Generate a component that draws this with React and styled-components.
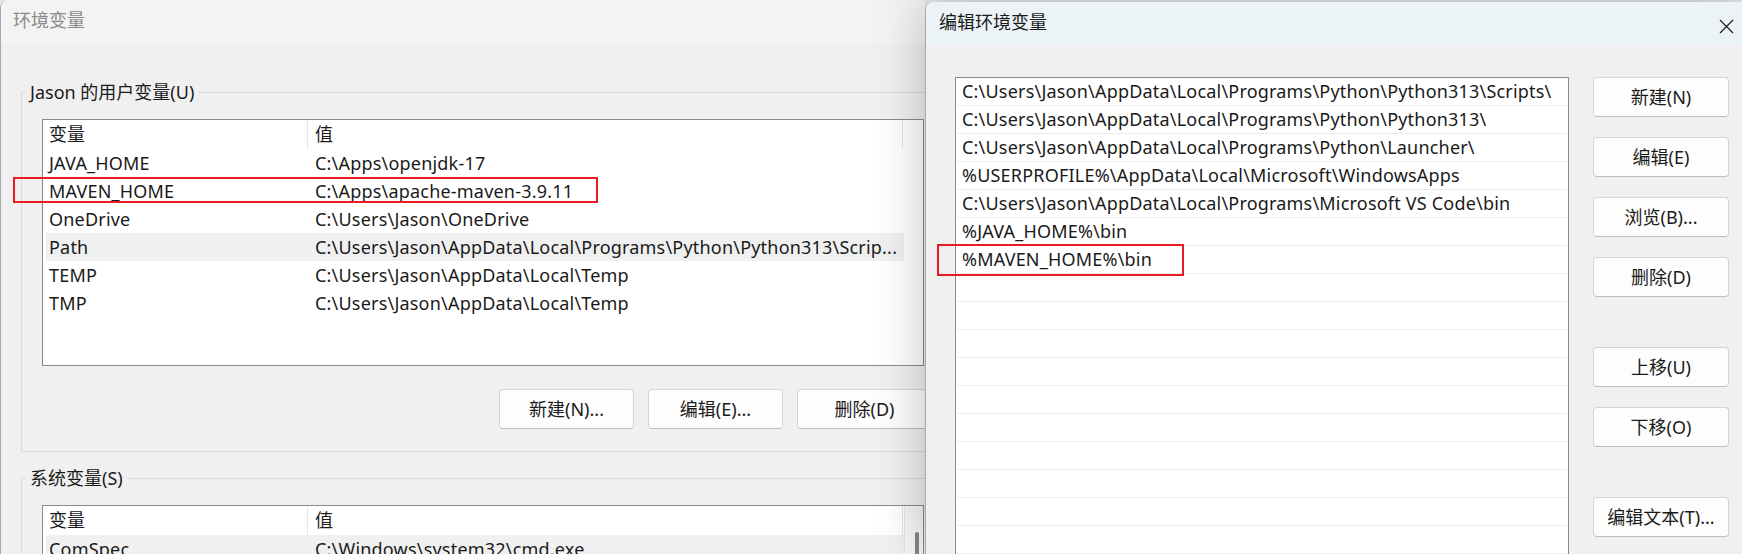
import React from "react";
import styled, { createGlobalStyle } from "styled-components";

const GlobalStyle = createGlobalStyle`
  * { box-sizing: border-box; }
  html, body { margin: 0; padding: 0; overflow: hidden; }
  body {
    background: #e4e4e4;
    font-family: "Noto Sans", "Noto Sans CJK SC", sans-serif;
    font-size: 18px;
    color: #1a1a1a;
  }
`;

const Desktop = styled.div`
  display: flex;
  width: 1742px;
  height: 554px;
  overflow: hidden;
  background: #e6e6e6;
`;

const EnvWindow = styled.div`
  flex: 0 0 925px;
  height: 554px;
  overflow: hidden;
  background: #f0f0f0;
  border-top-left-radius: 8px;
  border-left: 1px solid #a9a9a9;
  display: flex;
  flex-direction: column;
`;

const TitleBar = styled.div`
  flex: 0 0 43px;
  display: flex;
  align-items: flex-start;
  justify-content: space-between;
  padding: 8px 0 0 ${(p) => (p.$active ? 13 : 12)}px;
  background: ${(p) => (p.$active ? "#ebf3f7" : "#f3f3f3")};
  color: ${(p) => (p.$active ? "#1b1b1b" : "#8a8a8a")};
  font-size: 18px;
  line-height: 24px;
`;

const EnvBody = styled.div`
  display: flex;
  flex-direction: column;
  gap: 14px;
  padding: 37px 0 0 20px;
`;

const Group = styled.fieldset`
  margin: 0;
  padding: 0;
  min-width: 0;
  width: 980px;
  border: 1px solid #dadada;
`;

const Legend = styled.legend`
  margin-left: 4px;
  padding: 0 4px;
  font-size: 18px;
  line-height: 24px;
  color: #1a1a1a;
`;

const GroupInner = styled.div`
  padding: 15px 0 22px 20px;
`;

const ListBox = styled.div`
  width: 882px;
  height: ${(p) => p.$h}px;
  background: #fff;
  border: 1px solid #8a8a8a;
  display: flex;
`;

const ListContent = styled.div`
  flex: 1;
  display: flex;
  flex-direction: column;
`;

const HeaderRow = styled.div`
  display: grid;
  grid-template-columns: 265px 595px 1fr;
  height: 29px;
  flex: 0 0 29px;
`;

const HeaderCell = styled.div`
  padding-left: ${(p) => p.$pad}px;
  line-height: 29px;
  border-right: ${(p) => (p.$divider ? "1px solid #e5e5e5" : "none")};
  white-space: nowrap;
`;

const VarRow = styled.div`
  position: relative;
  display: grid;
  grid-template-columns: 262px 596px;
  width: 858px;
  margin-left: 3px;
  height: 28px;
  flex: 0 0 28px;
  background: ${(p) => (p.$hover ? "#f0f0f0" : "transparent")};
`;

const Cell = styled.div`
  padding-left: ${(p) => p.$pad}px;
  line-height: 28px;
  letter-spacing: 0.2px;
  white-space: nowrap;
  overflow: hidden;
`;

const Marker = styled.div`
  position: absolute;
  left: ${(p) => p.$left}px;
  top: ${(p) => p.$top}px;
  width: ${(p) => p.$w}px;
  height: ${(p) => p.$h}px;
  border: 2px solid #e81c24;
  pointer-events: none;
`;

const ScrollTrack = styled.div`
  flex: 0 0 19px;
  background: #f7f7f7;
  border-left: 1px solid #e6e6e6;
  padding: 26px 0 0 10px;
`;

const ScrollThumb = styled.div`
  width: 4px;
  height: 60px;
  border-radius: 2px;
  background: #858585;
`;

const ButtonRow = styled.div`
  display: flex;
  justify-content: flex-end;
  gap: 14px;
  width: 890px;
  margin-top: 23px;
`;

const Button = styled.button`
  flex: 0 0 auto;
  width: ${(p) => p.$w || 135}px;
  height: 40px;
  margin-top: ${(p) => p.$extra || 0}px;
  background: #fdfdfd;
  border: 1px solid #d3d3d3;
  border-bottom-color: #bdbdbd;
  border-radius: 4px;
  font-family: inherit;
  font-size: 18px;
  color: #1a1a1a;
  padding: 0;
  line-height: 38px;
  white-space: nowrap;
`;

const EditWindow = styled.div`
  flex: 1;
  position: relative;
  z-index: 1;
  margin-top: 2px;
  height: 552px;
  background: #f0f0f0;
  border-top-left-radius: 8px;
  border-left: 1px solid #a8a8a8;
  box-shadow: 0 0 50px rgba(0, 0, 0, 0.25);
  display: flex;
  flex-direction: column;
  overflow: hidden;
`;

const CloseButton = styled.div`
  width: 15px;
  height: 15px;
  margin: 9px 8px 0 0;
  display: flex;
`;

const EditBody = styled.div`
  display: flex;
  align-items: flex-start;
  padding: 32px 0 0 29px;
`;

const PathList = styled.div`
  width: 614px;
  height: 520px;
  background: #fff;
  border: 1px solid #8a8a8a;
  display: flex;
  flex-direction: column;
`;

const PathRow = styled.div`
  position: relative;
  flex: 0 0 28px;
  margin: 0 1px;
  padding-left: 5px;
  line-height: 27px;
  letter-spacing: 0.2px;
  border-bottom: 1px solid #ececec;
  white-space: nowrap;
`;

const SideButtons = styled.div`
  display: flex;
  flex-direction: column;
  gap: 20px;
  margin-left: 24px;
`;

const userVars = [
  ["JAVA_HOME", "C:\\Apps\\openjdk-17"],
  ["MAVEN_HOME", "C:\\Apps\\apache-maven-3.9.11", "marked"],
  ["OneDrive", "C:\\Users\\Jason\\OneDrive"],
  ["Path", "C:\\Users\\Jason\\AppData\\Local\\Programs\\Python\\Python313\\Scrip...", "hover"],
  ["TEMP", "C:\\Users\\Jason\\AppData\\Local\\Temp"],
  ["TMP", "C:\\Users\\Jason\\AppData\\Local\\Temp"],
];

const paths = [
  "C:\\Users\\Jason\\AppData\\Local\\Programs\\Python\\Python313\\Scripts\\",
  "C:\\Users\\Jason\\AppData\\Local\\Programs\\Python\\Python313\\",
  "C:\\Users\\Jason\\AppData\\Local\\Programs\\Python\\Launcher\\",
  "%USERPROFILE%\\AppData\\Local\\Microsoft\\WindowsApps",
  "C:\\Users\\Jason\\AppData\\Local\\Programs\\Microsoft VS Code\\bin",
  "%JAVA_HOME%\\bin",
  "%MAVEN_HOME%\\bin",
];

function VarHeader() {
  return (
    <HeaderRow>
      <HeaderCell $pad={6} $divider>变量</HeaderCell>
      <HeaderCell $pad={7} $divider>值</HeaderCell>
      <HeaderCell />
    </HeaderRow>
  );
}

export default function App() {
  const emptyRows = Array.from({ length: 12 });
  return (
    <>
      <GlobalStyle />
      <Desktop>
        <EnvWindow>
          <TitleBar>环境变量</TitleBar>
          <EnvBody>
            <Group>
              <Legend>Jason 的用户变量(U)</Legend>
              <GroupInner>
                <ListBox $h={247}>
                  <ListContent>
                    <VarHeader />
                    {userVars.map(([name, value, flag]) => (
                      <VarRow key={name} $hover={flag === "hover"}>
                        <Cell $pad={3}>{name}</Cell>
                        <Cell $pad={7}>{value}</Cell>
                        {flag === "marked" && <Marker $left={-33} $top={0} $w={585} $h={26} />}
                      </VarRow>
                    ))}
                  </ListContent>
                </ListBox>
                <ButtonRow>
                  <Button>新建(N)...</Button>
                  <Button>编辑(E)...</Button>
                  <Button>删除(D)</Button>
                </ButtonRow>
              </GroupInner>
            </Group>
            <Group>
              <Legend>系统变量(S)</Legend>
              <GroupInner>
                <ListBox $h={120}>
                  <ListContent>
                    <VarHeader />
                    <VarRow $hover>
                      <Cell $pad={3}>ComSpec</Cell>
                      <Cell $pad={7}>C:\Windows\system32\cmd.exe</Cell>
                    </VarRow>
                  </ListContent>
                  <ScrollTrack>
                    <ScrollThumb />
                  </ScrollTrack>
                </ListBox>
              </GroupInner>
            </Group>
          </EnvBody>
        </EnvWindow>

        <EditWindow>
          <TitleBar $active>
            <span>编辑环境变量</span>
            <CloseButton>
              <svg width="15" height="15" viewBox="0 0 15 15">
                <path d="M1 1 L14 14 M14 1 L1 14" stroke="#1b1b1b" strokeWidth="1.2" fill="none" />
              </svg>
            </CloseButton>
          </TitleBar>
          <EditBody>
            <PathList>
              {paths.map((p, i) => (
                <PathRow key={p}>
                  {p}
                  {i === paths.length - 1 && <Marker $left={-20} $top={-2} $w={247} $h={32} />}
                </PathRow>
              ))}
              {emptyRows.map((_, i) => (
                <PathRow key={"e" + i} />
              ))}
            </PathList>
            <SideButtons>
              <Button $w={136}>新建(N)</Button>
              <Button $w={136}>编辑(E)</Button>
              <Button $w={136}>浏览(B)...</Button>
              <Button $w={136}>删除(D)</Button>
              <Button $w={136} $extra={30}>上移(U)</Button>
              <Button $w={136}>下移(O)</Button>
              <Button $w={136} $extra={30}>编辑文本(T)...</Button>
            </SideButtons>
          </EditBody>
        </EditWindow>
      </Desktop>
    </>
  );
}
